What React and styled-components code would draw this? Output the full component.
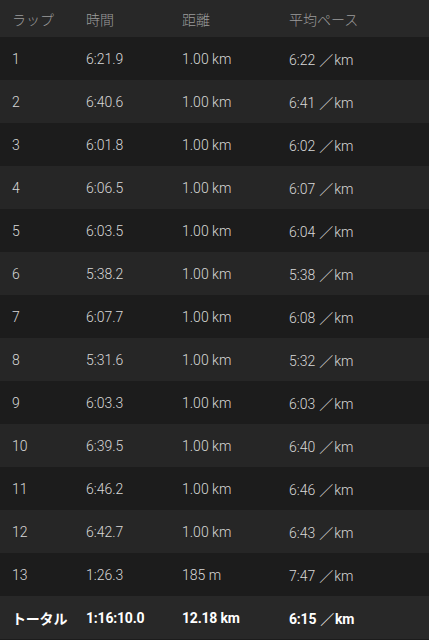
import React from "react";
import styled, { createGlobalStyle } from "styled-components";

const Global = createGlobalStyle`
  html, body { margin: 0; padding: 0; background: #1c1c1c; }
  body { font-family: Roboto, "Noto Sans CJK JP", sans-serif; }
`;

const Table = styled.div`
  width: 429px;
  height: 640px;
  display: flex;
  flex-direction: column;
  background: #1c1c1c;
  overflow: hidden;
`;

const Row = styled.div`
  display: grid;
  grid-template-columns: 74px 96px 107px 1fr;
  align-items: center;
  padding-left: 12px;
  height: ${(p) => p.$h}px;
  background: ${(p) => p.$bg};
  color: ${(p) => p.$color};
  font-size: 14px;
  font-weight: ${(p) => (p.$bold ? 700 : 300)};
  letter-spacing: ${(p) => (p.$bold ? "-0.2px" : "0")};
`;

const Cell = styled.span`
  white-space: nowrap;
  font-family: Roboto, "Noto Sans CJK JP", sans-serif;
`;

const Slash = styled.span`
  font-family: "Noto Sans CJK JP", sans-serif;
  font-weight: 300;
  margin: 0 1px 0 4px;
`;

const laps = [
  ["1", "6:21.9", "1.00 km", "6:22"],
  ["2", "6:40.6", "1.00 km", "6:41"],
  ["3", "6:01.8", "1.00 km", "6:02"],
  ["4", "6:06.5", "1.00 km", "6:07"],
  ["5", "6:03.5", "1.00 km", "6:04"],
  ["6", "5:38.2", "1.00 km", "5:38"],
  ["7", "6:07.7", "1.00 km", "6:08"],
  ["8", "5:31.6", "1.00 km", "5:32"],
  ["9", "6:03.3", "1.00 km", "6:03"],
  ["10", "6:39.5", "1.00 km", "6:40"],
  ["11", "6:46.2", "1.00 km", "6:46"],
  ["12", "6:42.7", "1.00 km", "6:43"],
  ["13", "1:26.3", "185 m", "7:47"],
];

function Pace({ v }) {
  return (
    <Cell>
      {v}
      <Slash>／</Slash>km
    </Cell>
  );
}

export default function App() {
  return (
    <>
      <Global />
      <Table>
        <Row $h={37} $bg="#282828" $color="#9c9c9c">
          <Cell>ラップ</Cell>
          <Cell>時間</Cell>
          <Cell>距離</Cell>
          <Cell>平均ペース</Cell>
        </Row>
        {laps.map((l, i) => (
          <Row
            key={l[0]}
            $h={43}
            $bg={i % 2 === 0 ? "#1c1c1c" : "#262626"}
            $color="#d8d8d8"
          >
            <Cell>{l[0]}</Cell>
            <Cell>{l[1]}</Cell>
            <Cell>{l[2]}</Cell>
            <Pace v={l[3]} />
          </Row>
        ))}
        <Row $h={43} $bg="#282828" $color="#ffffff" $bold>
          <Cell>トータル</Cell>
          <Cell>1:16:10.0</Cell>
          <Cell>12.18 km</Cell>
          <Pace v="6:15" />
        </Row>
      </Table>
    </>
  );
}
